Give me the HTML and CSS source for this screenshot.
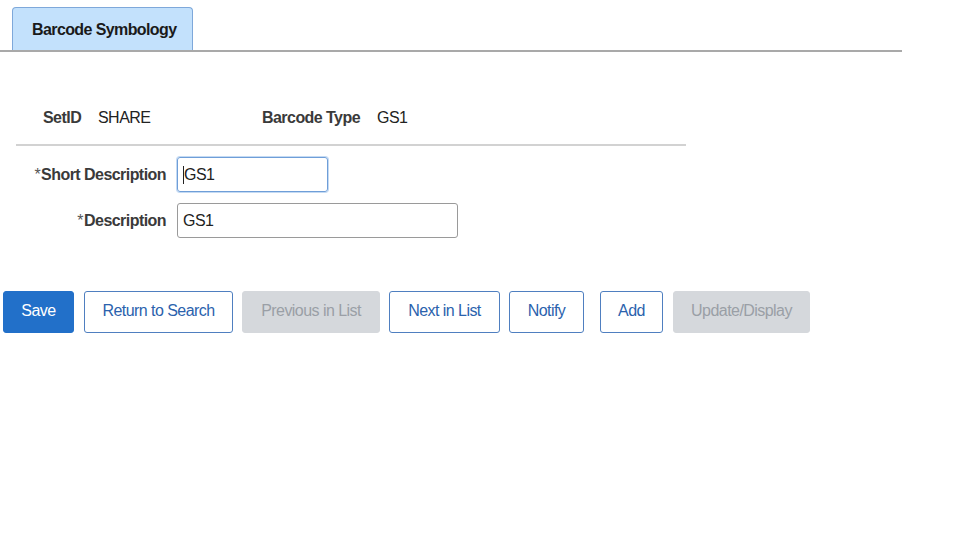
FILE: index.html
```html
<!DOCTYPE html>
<html>
<head>
<meta charset="utf-8">
<link rel="stylesheet" href="styles.css">
</head>
<body>
<div class="tabbar">
  <div class="tab">Barcode Symbology</div>
</div>
<div class="keys">
  <span class="k-label k1">SetID</span>
  <span class="k-val v1">SHARE</span>
  <span class="k-label k2">Barcode Type</span>
  <span class="k-val">GS1</span>
</div>
<div class="sep"></div>
<div class="form">
  <div class="row">
    <label class="f-label"><span class="req">*</span>Short Description</label>
    <div class="input short focused"><span class="caret"></span>GS1</div>
  </div>
  <div class="row">
    <label class="f-label"><span class="req">*</span>Description</label>
    <div class="input long">GS1</div>
  </div>
</div>
<div class="buttons">
  <button class="btn primary b-save">Save</button>
  <button class="btn outline b-ret">Return to Search</button>
  <button class="btn disabled b-prev">Previous in List</button>
  <button class="btn outline b-next">Next in List</button>
  <button class="btn outline b-notify">Notify</button>
  <button class="btn outline b-add">Add</button>
  <button class="btn disabled b-upd">Update/Display</button>
</div>
</body>
</html>
```
FILE: styles.css
```css
html, body {
  margin: 0;
  padding: 0;
  background: #fff;
  font-family: "Liberation Sans", Arial, sans-serif;
  color: #222;
}
.tabbar {
  width: 890px;
  padding: 7px 0 0 12px;
  border-bottom: 2px solid #a9a9a9;
  display: flex;
}
.tab {
  box-sizing: border-box;
  width: 181px;
  height: 43px;
  border: 1px solid #7ea8da;
  border-bottom: none;
  border-radius: 4px 4px 0 0;
  background: #c3e1fc;
  font-weight: bold;
  font-size: 16px;
  letter-spacing: -0.6px;
  color: #1a1a1a;
  padding-left: 19px;
  padding-top: 13px;
}
.keys {
  display: flex;
  align-items: center;
  margin-top: 56px;
  padding-left: 43px;
  height: 20px;
  font-size: 16px;
  letter-spacing: -0.55px;
}
.k-label {
  font-weight: bold;
  color: #3a3a3a;
}
.k1 { width: 55px; }
.v1 { width: 164px; }
.k2 { width: 115px; }
.k-val { color: #222; }
.sep {
  margin: 16px 0 0 16px;
  width: 670px;
  border-top: 2px solid #d2d2d2;
}
.form {
  margin-top: 11px;
  display: flex;
  flex-direction: column;
  gap: 11px;
}
.row {
  display: flex;
  align-items: center;
}
.f-label {
  width: 166px;
  text-align: right;
  font-weight: bold;
  font-size: 16px;
  letter-spacing: -0.55px;
  color: #3a3a3a;
  margin-right: 11px;
}
.req {
  font-weight: normal;
  color: #555;
  margin-right: 1px;
}
.input {
  box-sizing: border-box;
  height: 35px;
  border: 1px solid #9a9a9a;
  border-radius: 3px;
  font-size: 16px;
  letter-spacing: -0.55px;
  color: #222;
  padding: 0 5px;
  display: flex;
  align-items: center;
}
.short { width: 151px; }
.long { width: 281px; }
.focused {
  border-color: #6f9ed8;
  box-shadow: 0 0 0 1px #c4daf3;
}
.caret {
  width: 1px;
  height: 18px;
  background: #222;
}
.buttons {
  display: flex;
  margin-top: 53px;
  padding-left: 3px;
}
.btn {
  box-sizing: border-box;
  height: 42px;
  border-radius: 3px;
  font-family: "Liberation Sans", Arial, sans-serif;
  font-size: 16px;
  letter-spacing: -0.55px;
  padding: 0 0 3px 0;
  margin: 0 9px 0 0;
  cursor: pointer;
}
.primary {
  background: #2270c9;
  border: 1px solid #2270c9;
  color: #fff;
}
.outline {
  background: #fff;
  border: 1px solid #4f7fc0;
  color: #2b62ad;
}
.disabled {
  background: #d5d8dc;
  border: 1px solid #d5d8dc;
  color: #9a9fa6;
}
.b-save { width: 71px; margin-right: 10px; }
.b-ret { width: 149px; }
.b-prev { width: 138px; }
.b-next { width: 111px; }
.b-notify { width: 75px; margin-right: 16px; }
.b-add { width: 63px; margin-right: 10px; }
.b-upd { width: 137px; }
```
